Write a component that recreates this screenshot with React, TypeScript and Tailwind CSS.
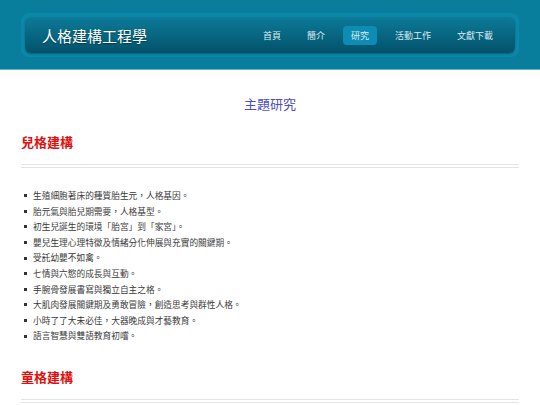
import React from 'react';

const navItems = ['首頁', '簡介', '研究', '活動工作', '文獻下載'];

const childItems = [
  '生殖細胞著床的種質胎生元，人格基因。',
  '胎元氣與胎兒期需要，人格基型。',
  '初生兒誕生的環境「胎宮」到「家宮」。',
  '嬰兒生理心理特徵及情緒分化伸展與充實的關鍵期。',
  '受託幼嬰不如禽。',
  '七情與六慾的成長與互動。',
  '手腕骨發展書寫與獨立自主之格。',
  '大肌肉發展關鍵期及勇敢冒險，創造思考與群性人格。',
  '小時了了大未必佳，大器晚成與才藝教育。',
  '語言智慧與雙語教育初嚐。',
];

const font = { fontFamily: '"Noto Sans CJK TC", "Noto Sans", sans-serif' };

function Divider() {
  return <div className="h-[4px] border-t border-b border-[#e4e4e4]" />;
}

export default function App() {
  return (
    <div className="min-h-[405px] bg-white" style={font}>
      <header className="h-[70px] bg-[#087d9c] border-b border-[#55b9ce] pt-[13px]">
        <div className="mx-[21px] rounded-lg bg-[#0b88a8] p-[4px]">
          <div className="flex h-[36px] items-center justify-between rounded-md bg-gradient-to-b from-[#0c7b99] to-[#04526a] pl-[17px] pr-[14px] shadow-[0_1px_2px_rgba(0,0,0,0.3)]">
            <span className="text-[15px] leading-none text-white [text-shadow:0_1px_1px_rgba(0,0,0,0.35)]">
              人格建構工程學
            </span>
            <nav className="flex items-center gap-[10px]">
              {navItems.map((item) => (
                <span
                  key={item}
                  className={`flex h-[19px] items-center rounded-sm px-2 text-[9px] leading-none text-[#dbeaf0] ${
                    item === '研究' ? 'bg-[#0e8db4]' : ''
                  }`}
                >
                  {item}
                </span>
              ))}
            </nav>
          </div>
        </div>
      </header>

      <main className="mx-[21px]">
        <h1 className="mt-[26px] text-center text-[13px] leading-[16px] text-[#4d4dcb]">主題研究</h1>

        <h2 className="mt-[22px] text-[13px] font-bold leading-[16px] text-[#e01010]">兒格建構</h2>
        <div className="mt-[14px]">
          <Divider />
        </div>

        <ul className="mt-[20px]">
          {childItems.map((item) => (
            <li key={item} className="flex items-center text-[8.7px] leading-[15.6px] text-[#3a3a3a]">
              <span className="ml-[3px] mr-[6px] h-[3px] w-[3px] bg-[#333]" />
              {item}
            </li>
          ))}
        </ul>

        <h2 className="mt-[25px] text-[13px] font-bold leading-[16px] text-[#e01010]">童格建構</h2>
        <div className="mt-[14px]">
          <Divider />
        </div>
      </main>
    </div>
  );
}
